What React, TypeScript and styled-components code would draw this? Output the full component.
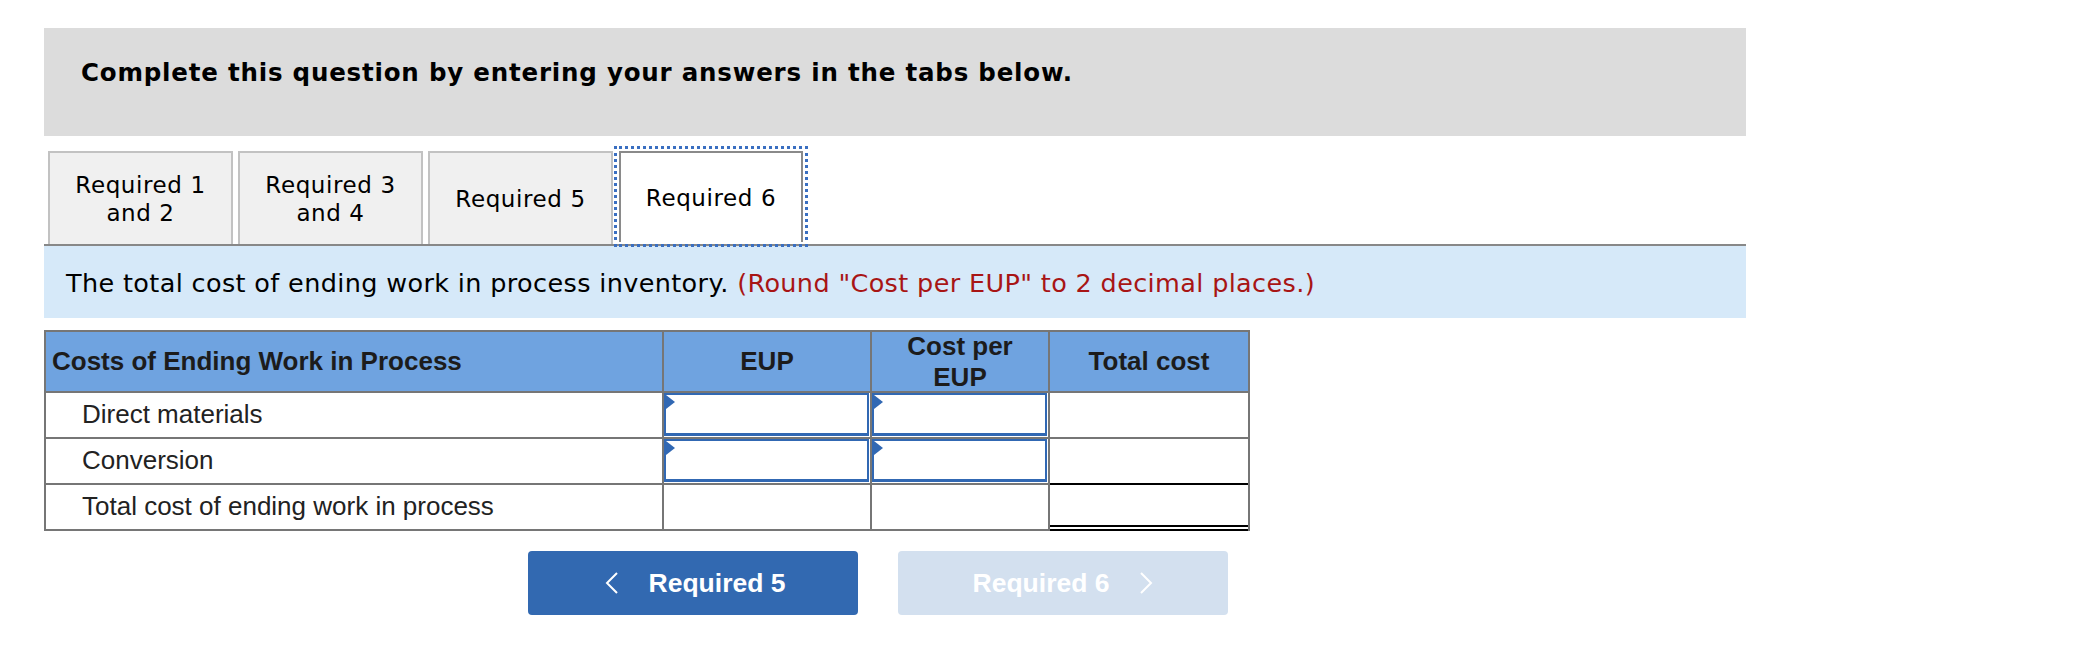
import React from "react";
import styled, { createGlobalStyle } from "styled-components";

const GlobalStyle = createGlobalStyle`
  html, body { margin: 0; padding: 0; background: #ffffff; }
  body { font-family: "DejaVu Sans", Verdana, sans-serif; color: #000; }
`;

const Page = styled.div`
  padding: 28px 0 0 44px;
  width: 1702px;
`;

const Banner = styled.div`
  box-sizing: border-box;
  height: 108px;
  background: #dcdcdc;
  padding: 31px 0 0 37px;
  font-family: "DejaVu Sans", Verdana, sans-serif;
  font-weight: bold;
  font-size: 24.5px;
  letter-spacing: 0.8px;
  line-height: 28px;
  color: #000;
`;

const TabBar = styled.div`
  display: flex;
  align-items: flex-start;
  gap: 5px;
  margin-top: 15px;
  padding-left: 4px;
  height: 93px;
  border-bottom: 2px solid #888888;
`;

const Tab = styled.div<{ $active?: boolean }>`
  box-sizing: border-box;
  width: ${(p) => (p.$active ? "184px" : "185px")};
  height: ${(p) => (p.$active ? "91px" : "93px")};
  margin-left: ${(p) => (p.$active ? "1px" : "0")};
  display: flex;
  align-items: center;
  justify-content: center;
  text-align: center;
  border: 2px solid ${(p) => (p.$active ? "#8a8a8a" : "#c2c2c2")};
  border-bottom: none;
  background: ${(p) => (p.$active ? "#ffffff" : "#f0f0f0")};
  font-size: 23px;
  letter-spacing: 0.6px;
  line-height: 28px;
  color: #000;
  outline: ${(p) => (p.$active ? "3px dotted #3a6fc1" : "none")};
  outline-offset: 2px;
  cursor: pointer;
`;

const Instruction = styled.div`
  box-sizing: border-box;
  height: 72px;
  background: #d6e9f9;
  padding: 22px 0 0 22px;
  font-size: 25.5px;
  letter-spacing: 0.36px;
  line-height: 30px;
  color: #000;
`;

const Note = styled.span`
  color: #a81515;
`;

const Grid = styled.div`
  box-sizing: border-box;
  margin-top: 12px;
  width: 1206px;
  display: grid;
  grid-template-columns: 616px 206px 176px 198px;
  grid-template-rows: 59px 44px 44px 44px;
  gap: 2px;
  padding: 2px;
  background: #767676;
  font-family: "Liberation Sans", Arial, sans-serif;
`;

const HeadCell = styled.div<{ $center?: boolean }>`
  display: flex;
  align-items: center;
  justify-content: ${(p) => (p.$center ? "center" : "flex-start")};
  text-align: ${(p) => (p.$center ? "center" : "left")};
  padding: 0 6px;
  background: #6fa3e0;
  font-weight: bold;
  font-size: 26px;
  color: #1c1c1c;
`;

const LabelCell = styled.div`
  display: flex;
  align-items: center;
  padding: 0 0 2px 36px;
  background: #ffffff;
  font-size: 26px;
  color: #222222;
`;

const InputCell = styled.div`
  position: relative;
  box-sizing: border-box;
  padding: 0 1px 1px 0;
  background: #ffffff;
`;

const AmountInput = styled.input`
  box-sizing: border-box;
  display: block;
  width: 100%;
  height: 100%;
  margin: 0;
  padding: 0 8px;
  border: 2px solid #3168b3;
  border-bottom-width: 3px;
  border-radius: 0;
  outline: none;
  background: #ffffff;
  font-family: "Liberation Sans", Arial, sans-serif;
  font-size: 24px;
  text-align: right;
`;

const Marker = styled.span`
  position: absolute;
  left: 2px;
  top: 2px;
  width: 0;
  height: 0;
  border-left: 9px solid #3168b3;
  border-top: 7px solid transparent;
  border-bottom: 7px solid transparent;
`;

const TotalCell = styled.div<{ $final?: boolean }>`
  background: #ffffff;
  ${(p) =>
    p.$final
      ? `
    margin: -2px 0 -2px 0;
    border-top: 2px solid #000000;
    border-bottom: 6px double #000000;
  `
      : ""}
`;

const PlainCell = styled.div`
  background: #ffffff;
`;

const Nav = styled.div`
  display: flex;
  gap: 40px;
  margin-top: 20px;
  padding-left: 484px;
`;

const NavButton = styled.button<{ $disabled?: boolean }>`
  box-sizing: border-box;
  width: 330px;
  height: 64px;
  display: flex;
  align-items: center;
  justify-content: center;
  gap: 30px;
  border: none;
  border-radius: 4px;
  padding: ${(p) => (p.$disabled ? "0" : "0 0 0 4px")};
  background: ${(p) => (p.$disabled ? "#d3e0ef" : "#3269b1")};
  color: #ffffff;
  font-family: "Liberation Sans", Arial, sans-serif;
  font-weight: bold;
  font-size: 26.5px;
  cursor: ${(p) => (p.$disabled ? "default" : "pointer")};
`;

const Chevron = ({ dir }: { dir: "left" | "right" }) => (
  <svg width="14" height="22" viewBox="0 0 14 22" aria-hidden="true">
    <polyline
      points={dir === "left" ? "12,1 2,11 12,21" : "2,1 12,11 2,21"}
      fill="none"
      stroke="#ffffff"
      strokeWidth="2"
    />
  </svg>
);

const tabs = [
  { id: 1, label: ["Required 1", "and 2"] },
  { id: 2, label: ["Required 3", "and 4"] },
  { id: 3, label: ["Required 5"] },
  { id: 4, label: ["Required 6"] },
];

const rows = ["Direct materials", "Conversion"];

export default function App() {
  return (
    <>
      <GlobalStyle />
      <Page>
        <Banner>Complete this question by entering your answers in the tabs below.</Banner>
        <TabBar role="tablist">
          {tabs.map((t) => (
            <Tab key={t.id} role="tab" $active={t.id === 4}>
              <span>
                {t.label.map((l, i) => (
                  <React.Fragment key={i}>
                    {i > 0 && <br />}
                    {l}
                  </React.Fragment>
                ))}
              </span>
            </Tab>
          ))}
        </TabBar>
        <Instruction>
          The total cost of ending work in process inventory.{" "}
          <Note>(Round "Cost per EUP" to 2 decimal places.)</Note>
        </Instruction>
        <Grid>
          <HeadCell>Costs of Ending Work in Process</HeadCell>
          <HeadCell $center>EUP</HeadCell>
          <HeadCell $center>
            Cost per
            <br />
            EUP
          </HeadCell>
          <HeadCell $center>Total cost</HeadCell>
          {rows.map((r) => (
            <React.Fragment key={r}>
              <LabelCell>{r}</LabelCell>
              <InputCell>
                <AmountInput type="text" aria-label={`${r} EUP`} />
                <Marker />
              </InputCell>
              <InputCell>
                <AmountInput type="text" aria-label={`${r} cost per EUP`} />
                <Marker />
              </InputCell>
              <TotalCell />
            </React.Fragment>
          ))}
          <LabelCell>Total cost of ending work in process</LabelCell>
          <PlainCell />
          <PlainCell />
          <TotalCell $final />
        </Grid>
        <Nav>
          <NavButton>
            <Chevron dir="left" />
            <span>Required 5</span>
          </NavButton>
          <NavButton $disabled>
            <span>Required 6</span>
            <Chevron dir="right" />
          </NavButton>
        </Nav>
      </Page>
    </>
  );
}
